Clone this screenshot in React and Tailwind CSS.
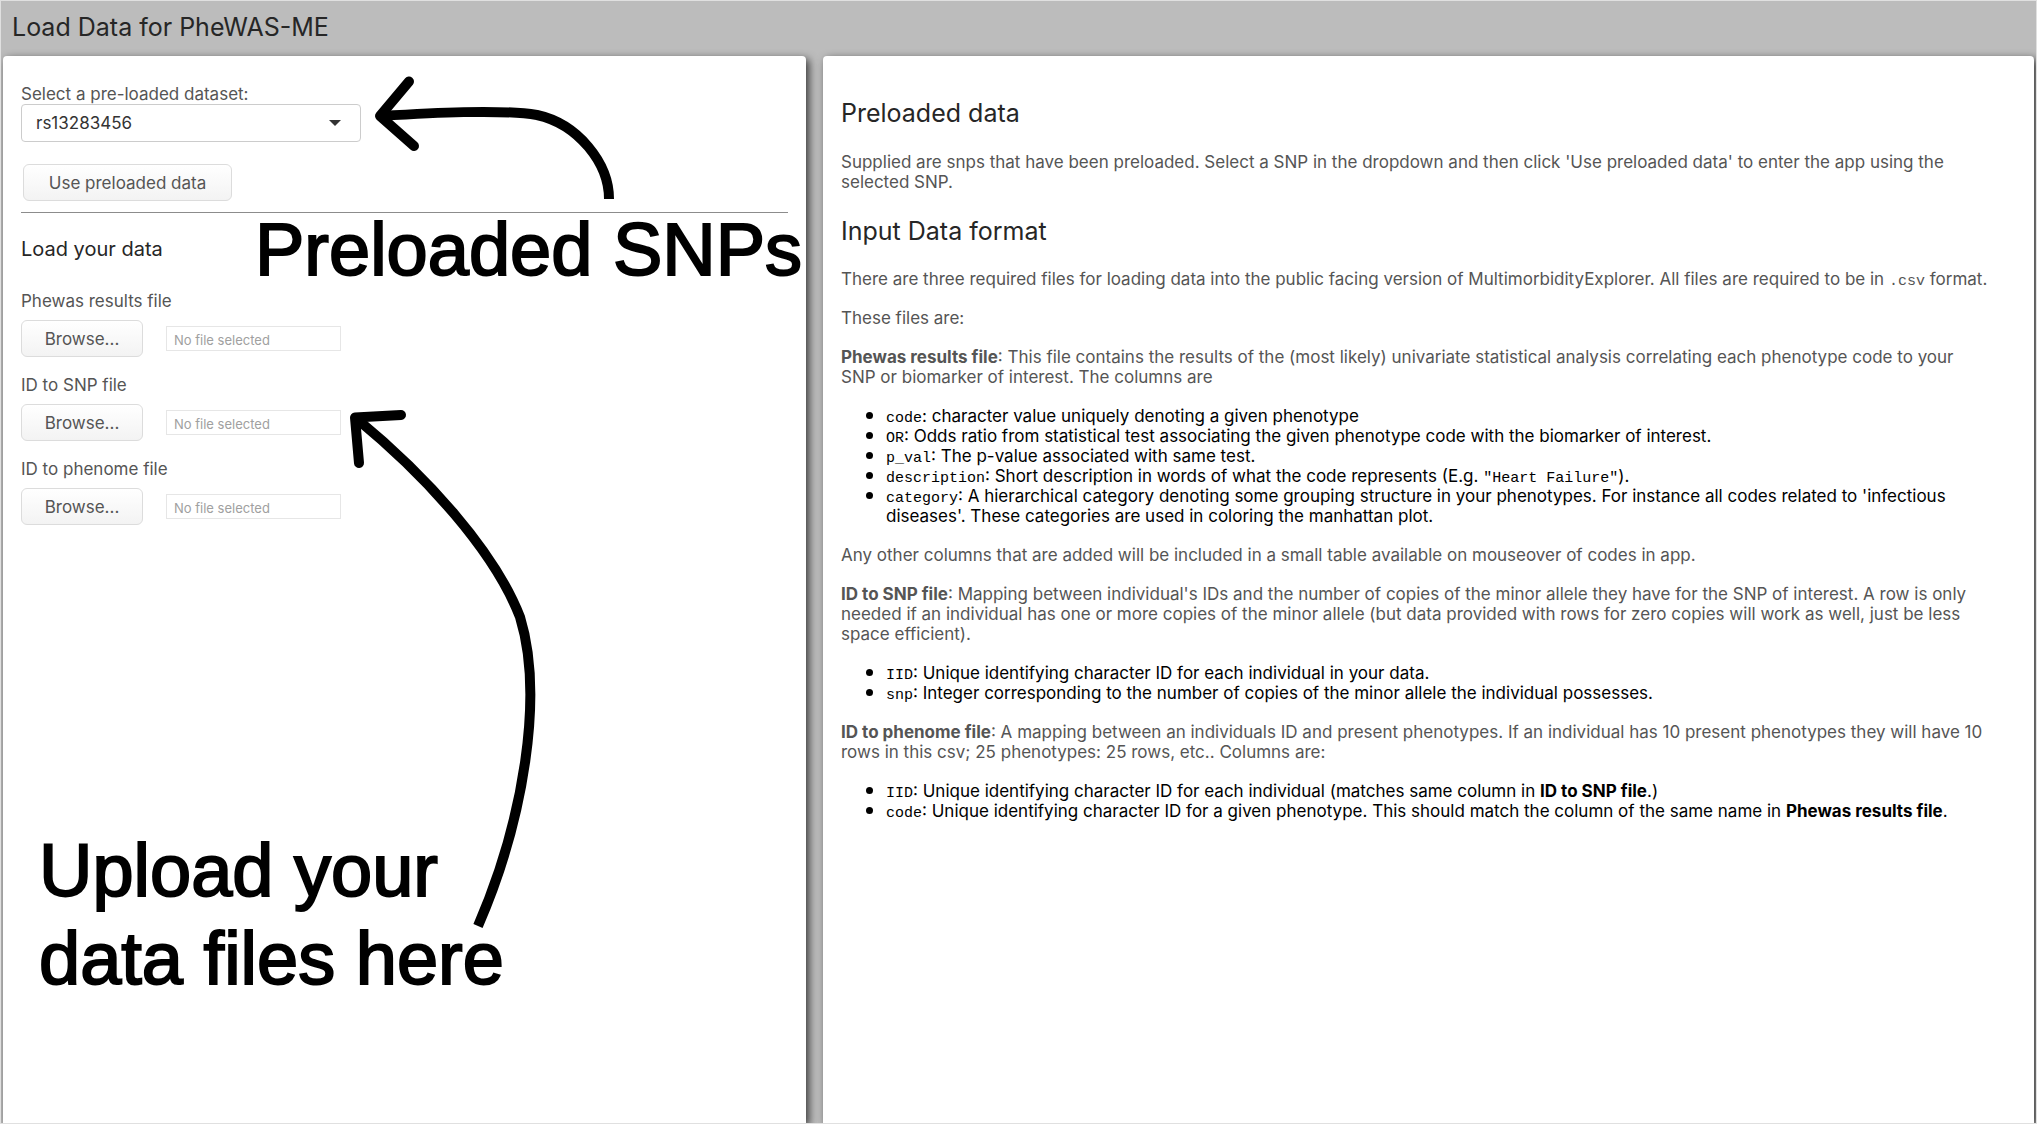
const files = [
  { id: 'phewas', label: 'Phewas results file' },
  { id: 'snp', label: 'ID to SNP file' },
  { id: 'phenome', label: 'ID to phenome file' },
];

const buttonClass =
  'h-[37px] rounded-md border border-[#dcdcdc] bg-linear-to-b from-white to-[#f3f3f3] text-[17px] leading-5 text-[#555]';

function Code({ children }) {
  return <code className="font-['Liberation_Mono',monospace] text-[15px] leading-none">{children}</code>;
}

function List({ children }) {
  return <ul className="pl-[45px] text-black">{children}</ul>;
}

function Item({ children }) {
  return (
    <li className="relative before:absolute before:-left-5 before:top-[6px] before:size-[7px] before:rounded-full before:bg-black">
      {children}
    </li>
  );
}

function FileField({ id, label }) {
  return (
    <div className="flex flex-col gap-[9px]">
      <label htmlFor={id} className="leading-5">{label}</label>
      <div className="flex items-center gap-[23px]">
        <button type="button" className={`${buttonClass} w-[122px]`}>Browse...</button>
        <input
          id={id}
          type="text"
          readOnly
          placeholder="No file selected"
          className="h-[25px] w-[175px] border border-[#e6e6e6] bg-white px-[7px] pt-[2px] text-[13px] placeholder:text-[#a0a0a0]"
        />
      </div>
    </div>
  );
}

function Annotations() {
  return (
    <div className="pointer-events-none absolute inset-0 font-['Liberation_Sans',sans-serif] text-[74px] leading-[88px] text-black [-webkit-text-stroke:2px_black]">
      <svg className="absolute left-0 top-0" width="800" height="1000" viewBox="3 56 800 1000" fill="none" stroke="black" strokeWidth="10">
        <path d="M409 81.500L380 116L414 146" strokeLinecap="round" strokeLinejoin="round" />
        <path d="M381 116C430 113 500 109 537 115C578 124 609 163 609 199" />
        <path d="M401 415L355 417.500L359 463" strokeLinecap="round" strokeLinejoin="round" />
        <path d="M357 419C425 475 494 550 520 617C544 695 524 820 478 926" />
      </svg>
      <p className="absolute left-[252px] top-[150px] whitespace-nowrap">Preloaded SNPs</p>
      <p className="absolute left-[36px] top-[771px] whitespace-nowrap">Upload your<br />data files here</p>
    </div>
  );
}

export default function App() {
  return (
    <div className="min-h-screen border border-[#e0e0e0] bg-[#bcbcbc] font-[Inter,sans-serif] text-[17px] leading-5 text-[#555]">
      <div className="flex min-h-[calc(100vh-2px)] flex-col overflow-hidden px-[2px]">
        <header className="px-[9px] pb-[13px] pt-[11px]">
          <h1 className="text-[25px] leading-[31px] text-[#262626]">Load Data for PheWAS-ME</h1>
        </header>
        <main className="grid flex-1 grid-cols-[803fr_1211fr] gap-[17px]">
          <section className="relative rounded-t-[4px] bg-white px-[18px] pt-[28px] shadow-[3px_3px_8px_rgba(0,0,0,0.7)]">
            <label htmlFor="dataset" className="block leading-5">Select a pre-loaded dataset:</label>
            <div className="relative w-[340px]">
              <select id="dataset" className="h-[38px] w-full appearance-none rounded-[4px] border border-[#ccc] bg-white px-[14px] text-[17px] text-[#333]">
                <option>rs13283456</option>
              </select>
              <svg className="pointer-events-none absolute right-[20px] top-[16px]" width="12" height="6" viewBox="0 0 12 6" fill="#333" aria-hidden="true">
                <path d="M0 0H12L6 6Z" />
              </svg>
            </div>
            <button type="button" className={`${buttonClass} ml-[2px] mt-[22px] block w-[209px]`}>Use preloaded data</button>
            <hr className="mt-[11px] border-[#8c8c8c]" />
            <h2 className="mt-[24px] text-[20px] leading-6 text-[#262626]">Load your data</h2>
            <div className="mt-[30px] flex flex-col gap-[18px]">
              {files.map((f) => <FileField key={f.id} {...f} />)}
            </div>
            <Annotations />
          </section>

          <section className="rounded-t-[4px] bg-white pl-[18px] pr-[43px] pt-[41px] shadow-[3px_3px_8px_rgba(0,0,0,0.7)]">
            <h2 className="text-[25px] leading-[32px] text-[#262626]">Preloaded data</h2>
            <p className="mt-[23px]">
              Supplied are snps that have been preloaded. Select a SNP in the dropdown and then click 'Use preloaded data' to enter the app using the selected SNP.
            </p>
            <h2 className="mt-[23px] text-[25px] leading-[32px] text-[#262626]">Input Data format</h2>
            <div className="mt-[22px] flex flex-col gap-[19px]">
              <p>There are three required files for loading data into the public facing version of MultimorbidityExplorer. All files are required to be in <Code>.csv</Code> format.</p>
              <p>These files are:</p>
              <p><strong>Phewas results file</strong>: This file contains the results of the (most likely) univariate statistical analysis correlating each phenotype code to your SNP or biomarker of interest. The columns are</p>
              <List>
                <Item><Code>code</Code>: character value uniquely denoting a given phenotype</Item>
                <Item><Code>OR</Code>: Odds ratio from statistical test associating the given phenotype code with the biomarker of interest.</Item>
                <Item><Code>p_val</Code>: The p-value associated with same test.</Item>
                <Item><Code>description</Code>: Short description in words of what the code represents (E.g. <Code>"Heart Failure"</Code>).</Item>
                <Item><Code>category</Code>: A hierarchical category denoting some grouping structure in your phenotypes. For instance all codes related to 'infectious diseases'. These categories are used in coloring the manhattan plot.</Item>
              </List>
              <p>Any other columns that are added will be included in a small table available on mouseover of codes in app.</p>
              <p><strong>ID to SNP file</strong>: Mapping between individual's IDs and the number of copies of the minor allele they have for the SNP of interest. A row is only needed if an individual has one or more copies of the minor allele (but data provided with rows for zero copies will work as well, just be less space efficient).</p>
              <List>
                <Item><Code>IID</Code>: Unique identifying character ID for each individual in your data.</Item>
                <Item><Code>snp</Code>: Integer corresponding to the number of copies of the minor allele the individual possesses.</Item>
              </List>
              <p><strong>ID to phenome file</strong>: A mapping between an individuals ID and present phenotypes. If an individual has 10 present phenotypes they will have 10 rows in this csv; 25 phenotypes: 25 rows, etc.. Columns are:</p>
              <List>
                <Item><Code>IID</Code>: Unique identifying character ID for each individual (matches same column in <strong>ID to SNP file</strong>.)</Item>
                <Item><Code>code</Code>: Unique identifying character ID for a given phenotype. This should match the column of the same name in <strong>Phewas results file</strong>.</Item>
              </List>
            </div>
          </section>
        </main>
      </div>
    </div>
  );
}
